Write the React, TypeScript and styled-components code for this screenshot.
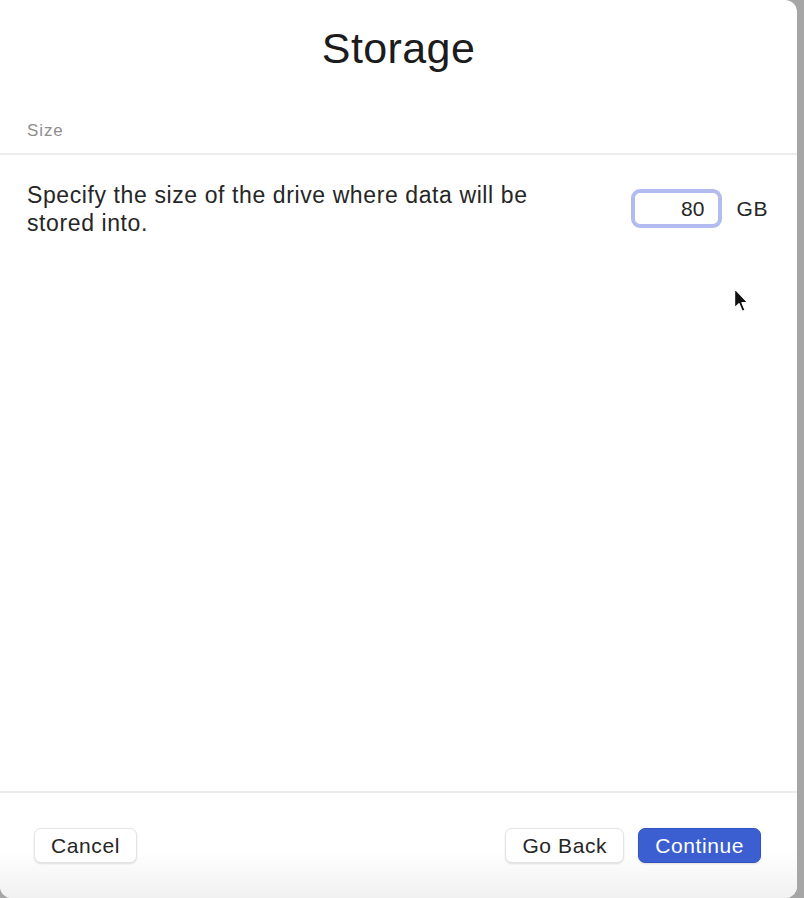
import React, { useState } from 'react';
import styled, { createGlobalStyle } from 'styled-components';

const GlobalStyle = createGlobalStyle`
  html, body {
    margin: 0;
    padding: 0;
    background: #a6a6a6;
    font-family: "Liberation Sans", Arial, sans-serif;
    overflow: hidden;
  }
`;

const Window = styled.div`
  position: relative;
  width: 797px;
  height: 898px;
  background: #ffffff;
  border-radius: 0 12px 12px 12px;
  display: flex;
  flex-direction: column;
  overflow: hidden;
  box-sizing: border-box;
`;

const Title = styled.h1`
  margin: 0;
  padding-top: 22px;
  height: 74px;
  box-sizing: border-box;
  text-align: center;
  font-size: 43px;
  font-weight: 400;
  letter-spacing: 0.4px;
  color: #1c1c1c;
  line-height: 52px;
`;

const SectionLabel = styled.div`
  padding: 46px 27px 0;
  height: 81px;
  box-sizing: border-box;
  font-size: 17px;
  letter-spacing: 0.9px;
  color: #8e8e8e;
  line-height: 22px;
  border-bottom: 2px solid #ececec;
`;

const Row = styled.div`
  display: flex;
  align-items: flex-start;
  justify-content: space-between;
  padding: 26px 29px 0 27px;
`;

const Description = styled.p`
  margin: 0;
  width: 540px;
  font-size: 23px;
  line-height: 28px;
  letter-spacing: 0.6px;
  color: #262626;
`;

const SizeControl = styled.div`
  display: flex;
  align-items: center;
  gap: 14px;
  margin-top: 8px;
`;

const SizeInput = styled.input`
  width: 91px;
  height: 39px;
  box-sizing: border-box;
  border: 4px solid #b3bcf0;
  border-radius: 9px;
  padding: 0 14px 0 8px;
  text-align: right;
  font-family: inherit;
  font-size: 21px;
  color: #262626;
  outline: none;
  background: #fff;
  caret-color: #111;
`;

const Unit = styled.span`
  font-size: 21px;
  color: #262626;
  letter-spacing: 0.6px;
`;

const Spacer = styled.div`
  flex: 1;
`;

const Footer = styled.div`
  height: 107px;
  box-sizing: border-box;
  border-top: 2px solid #ececec;
  background: linear-gradient(to bottom, #ffffff 55%, #f1f1f1 100%);
  display: flex;
  align-items: flex-start;
  justify-content: space-between;
  padding: 35px 36px 0 34px;
`;

const ButtonGroup = styled.div`
  display: flex;
  gap: 14px;
`;

const Button = styled.button<{ $primary?: boolean }>`
  height: 35px;
  padding: 0 16px;
  border-radius: 7px;
  font-family: inherit;
  font-size: 21px;
  letter-spacing: 0.6px;
  cursor: pointer;
  border: 1px solid ${p => (p.$primary ? '#3355c4' : '#e4e4e4')};
  background: ${p => (p.$primary ? '#3b5fd0' : '#ffffff')};
  color: ${p => (p.$primary ? '#ffffff' : '#262626')};
  box-shadow: 0 1px 2px rgba(0, 0, 0, 0.12);
`;

const Pointer = styled.svg`
  position: absolute;
  left: 733px;
  top: 287px;
  pointer-events: none;
`;

export default function App() {
  const [size, setSize] = useState('80');

  return (
    <>
      <GlobalStyle />
      <Window>
        <Title>Storage</Title>
        <SectionLabel>Size</SectionLabel>
        <Row>
          <Description>
            Specify the size of the drive where data will be stored into.
          </Description>
          <SizeControl>
            <SizeInput value={size} onChange={e => setSize(e.target.value)} />
            <Unit>GB</Unit>
          </SizeControl>
        </Row>
        <Spacer />
        <Footer>
          <Button>Cancel</Button>
          <ButtonGroup>
            <Button>Go Back</Button>
            <Button $primary>Continue</Button>
          </ButtonGroup>
        </Footer>
        <Pointer width="18" height="28" viewBox="0 0 18 28">
          <path
            d="M1.5 1.5 L1.5 21 L6 16.8 L9.2 24.5 L12.2 23.2 L9 15.8 L15 15.8 Z"
            fill="#111"
            stroke="#fff"
            strokeWidth="1.4"
            strokeLinejoin="round"
          />
        </Pointer>
      </Window>
    </>
  );
}
